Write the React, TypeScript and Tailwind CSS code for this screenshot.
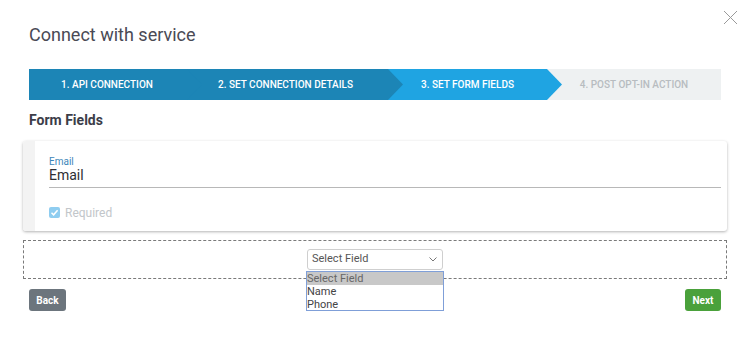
import React from "react";

const font = { fontFamily: "Roboto, 'Liberation Sans', sans-serif" };

function Arrow({ color }: { color: string }) {
  return (
    <svg
      className="absolute top-0 right-[-15px] z-10"
      width="15"
      height="31"
      viewBox="0 0 15 31"
    >
      <polygon points="0,0 15,15.5 0,31" fill={color} />
    </svg>
  );
}

export default function App() {
  return (
    <div className="w-[750px] h-[348px] bg-white relative overflow-hidden" style={font}>
      <button className="absolute left-[723px] top-[10px] w-[15px] h-[15px]">
        <svg width="15" height="15" viewBox="0 0 15 15">
          <path d="M1 1 L14 14 M14 1 L1 14" stroke="#9a9a9a" strokeWidth="1" />
        </svg>
      </button>
      <div className="px-[23px]">
        <h1 className="ml-[6px] mt-[23px] h-[24px] text-[18px] leading-[24px] text-[#4a4a55] font-normal">
          Connect with service
        </h1>
        <div className="ml-[6px] mr-[6px] mt-[22px] flex h-[31px] text-[10px] font-medium uppercase text-white">
          <div className="relative w-[158px] bg-[#1c85b6] flex items-center justify-center pr-[2px]">
            1. API CONNECTION
            <Arrow color="#1c85b6" />
          </div>
          <div className="relative w-[201px] bg-[#1c85b6] flex items-center justify-center pr-[4px]">
            2. SET CONNECTION DETAILS
            <Arrow color="#1c85b6" />
          </div>
          <div className="relative w-[159px] bg-[#1fa4e2] flex items-center justify-center">
            3. SET FORM FIELDS
            <Arrow color="#1fa4e2" />
          </div>
          <div className="flex-1 bg-[#eef1f2] flex items-center justify-center text-[#b7bcc0]">
            4. POST OPT-IN ACTION
          </div>
        </div>
        <h2 className="ml-[6px] mt-[12px] h-[16px] text-[14px] leading-[16px] font-bold text-[#3b3d48]">
          Form Fields
        </h2>
        <div className="mt-[13px] flex rounded-[3px] bg-white shadow-[0_1px_3px_rgba(0,0,0,0.3)] overflow-hidden">
          <div className="w-[12px] bg-[#f3f3f3]" />
          <div className="flex-1 pl-[14px] pr-[6px] pt-[15px] pb-[13px]">
            <div className="text-[10px] leading-[11px] text-[#3d86ba]">Email</div>
            <div className="text-[14px] leading-[17px] text-[#2e2e33] pb-[3px] border-b border-[#b8b8b8]">
              Email
            </div>
            <div className="mt-[19px] flex items-center h-[11px]">
              <span className="w-[11px] h-[11px] rounded-[2px] bg-[#8fcdf0] flex items-center justify-center">
                <svg width="9" height="9" viewBox="0 0 9 9">
                  <path d="M1.5 4.8 L3.6 6.8 L7.6 2.2" stroke="white" strokeWidth="1.5" fill="none" />
                </svg>
              </span>
              <span className="ml-[5px] text-[12px] text-[#c2c6ca]">Required</span>
            </div>
          </div>
        </div>
        <div className="mt-[9px] h-[39px] border border-dashed border-[#7a7a7a] flex items-center justify-center">
          <div className="relative">
            <div className="w-[136px] h-[21px] rounded-[3px] border border-[#cfcfcf] flex items-center justify-between pl-[4px] pr-[5px] text-[11px] text-[#555]">
              <span>Select Field</span>
              <svg width="8" height="5" viewBox="0 0 8 5">
                <path d="M0.5 0.5 L4 4 L7.5 0.5" stroke="#777" strokeWidth="1" fill="none" />
              </svg>
            </div>
            <div className="absolute left-[-1px] top-[22px] w-[138px] h-[40px] bg-white border border-[#7f9fd8] text-[11px] leading-[13px] text-[#444] z-20">
              <div className="bg-[#c8c8c8] text-[#666] h-[13px]">Select Field</div>
              <div>Name</div>
              <div>Phone</div>
            </div>
          </div>
        </div>
        <div className="mt-[10px] mx-[6px] flex justify-between">
          <button className="w-[37px] h-[22px] rounded-[3px] bg-[#6c757d] text-white text-[10px] font-bold">
            Back
          </button>
          <button className="w-[36px] h-[22px] rounded-[3px] bg-[#4aa13b] text-white text-[10px] font-bold">
            Next
          </button>
        </div>
      </div>
    </div>
  );
}
